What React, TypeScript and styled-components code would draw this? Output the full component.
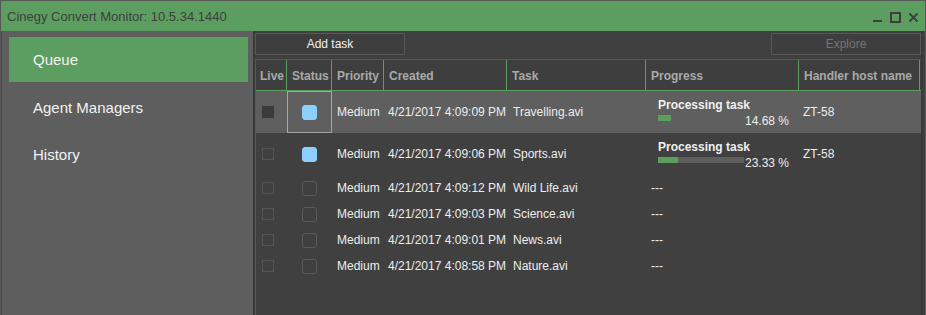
import * as React from 'react';
import styled, { createGlobalStyle } from 'styled-components';

const GlobalStyle = createGlobalStyle`
  html, body {
    margin: 0;
    padding: 0;
    background: #404040;
  }
  body {
    font-family: 'Liberation Sans', Arial, sans-serif;
  }
`;

const green = '#5c9e5f';
const cols = '31px 45px 52px 123px 139px 153px 121px';

type Task = {
  live: 'filled' | 'outline';
  status: 'active' | 'idle';
  created: string;
  name: string;
  progress?: number;
  host?: string;
  selected?: boolean;
};

const tasks: Task[] = [
  { live: 'filled', status: 'active', created: '4/21/2017 4:09:09 PM', name: 'Travelling.avi', progress: 14.68, host: 'ZT-58', selected: true },
  { live: 'outline', status: 'active', created: '4/21/2017 4:09:06 PM', name: 'Sports.avi', progress: 23.33, host: 'ZT-58' },
  { live: 'outline', status: 'idle', created: '4/21/2017 4:09:12 PM', name: 'Wild Life.avi' },
  { live: 'outline', status: 'idle', created: '4/21/2017 4:09:03 PM', name: 'Science.avi' },
  { live: 'outline', status: 'idle', created: '4/21/2017 4:09:01 PM', name: 'News.avi' },
  { live: 'outline', status: 'idle', created: '4/21/2017 4:08:58 PM', name: 'Nature.avi' },
];

const Window = styled.div`
  width: 926px;
  height: 315px;
  box-sizing: border-box;
  border: 1px solid #585858;
  border-bottom: none;
  display: flex;
  flex-direction: column;
  overflow: hidden;
  background: #404040;
`;

const TitleBar = styled.div`
  height: 30px;
  flex: none;
  background: ${green};
  display: flex;
  align-items: center;
  justify-content: space-between;
  padding: 0 6px 0 6px;
  color: #3e3e3e;
  font-size: 13px;
`;

const Controls = styled.div`
  display: flex;
  align-items: center;
  gap: 7px;
  margin-top: 2px;
`;

const Body = styled.div`
  flex: 1;
  display: flex;
  min-height: 0;
`;

const Sidebar = styled.nav`
  width: 252px;
  flex: none;
  background: #5e5e5e;
  border-left: 1px solid #4a4a4a;
  box-sizing: border-box;
  padding: 6px 5px 0 7px;
  display: flex;
  flex-direction: column;
`;

const NavItem = styled.div<{ $active?: boolean }>`
  height: 45px;
  flex: none;
  display: flex;
  align-items: center;
  padding-left: 24px;
  margin-bottom: 2.5px;
  font-size: 15px;
  color: #f2f2f2;
  background: ${({ $active }) => ($active ? green : 'transparent')};
`;

const Divider = styled.div`
  width: 2px;
  flex: none;
  background: #393939;
`;

const Main = styled.main`
  width: 666px;
  flex: none;
  padding-top: 2px;
  display: flex;
  flex-direction: column;
`;

const Toolbar = styled.div`
  display: flex;
  justify-content: space-between;
  margin-bottom: 4px;
`;

const ToolButton = styled.button<{ $disabled?: boolean }>`
  width: 150px;
  height: 22px;
  box-sizing: border-box;
  border: 1px solid #585858;
  background: #3e3e3e;
  color: ${({ $disabled }) => ($disabled ? '#757575' : '#f0f0f0')};
  font-family: 'Liberation Sans', Arial, sans-serif;
  font-size: 12px;
  padding: 0;
`;

const Table = styled.div`
  flex: 1;
  border-left: 1px solid #575757;
  border-top: 1px solid #575757;
  display: flex;
  flex-direction: column;
`;

const HeaderRow = styled.div`
  display: grid;
  grid-template-columns: ${cols};
  height: 30px;
  border-bottom: 1px solid ${green};
  background: #3e3e3e;
`;

const HeaderCell = styled.div`
  border-right: 1px solid ${green};
  display: flex;
  align-items: center;
  padding-left: 5px;
  padding-top: 1px;
  font-size: 12px;
  font-weight: bold;
  color: #a9a9a9;
  white-space: nowrap;
  overflow: hidden;
  &:first-child {
    padding-left: 4px;
  }
`;

const Row = styled.div<{ $tall?: boolean; $selected?: boolean }>`
  display: grid;
  grid-template-columns: ${cols};
  height: ${({ $tall }) => ($tall ? 42 : 26)}px;
  background: ${({ $selected }) => ($selected ? '#5f5f5f' : 'transparent')};
  font-size: 12px;
  color: #eeeeee;
`;

const Cell = styled.div<{ $pad?: number }>`
  display: flex;
  align-items: center;
  padding-left: ${({ $pad }) => $pad ?? 5}px;
  white-space: nowrap;
  overflow: hidden;
  box-sizing: border-box;
`;

const StatusCell = styled(Cell)<{ $focus?: boolean }>`
  justify-content: center;
  padding-left: 0;
  border: 1px solid ${({ $focus }) => ($focus ? '#a6a6a6' : 'transparent')};
`;

const LiveBox = styled.div<{ $filled?: boolean }>`
  width: 12px;
  height: 12px;
  box-sizing: border-box;
  margin-left: 6px;
  background: ${({ $filled }) => ($filled ? '#3b3b3b' : 'transparent')};
  border: 1px solid ${({ $filled }) => ($filled ? '#3b3b3b' : '#555555')};
`;

const StatusBox = styled.div<{ $active?: boolean }>`
  width: 15px;
  height: 15px;
  box-sizing: border-box;
  border-radius: 3px;
  background: ${({ $active }) => ($active ? '#8ccffc' : 'transparent')};
  border: 1px solid ${({ $active }) => ($active ? '#8ccffc' : '#5b5b5b')};
`;

const Progress = styled.div`
  margin-left: 7px;
  width: 131px;
  display: flex;
  flex-direction: column;
`;

const ProgressTitle = styled.div`
  font-weight: bold;
  font-size: 12px;
  color: #f0f0f0;
  line-height: 14px;
`;

const ProgressLine = styled.div`
  display: flex;
  align-items: flex-start;
  justify-content: space-between;
  height: 14px;
`;

const Track = styled.div`
  width: 86px;
  height: 6px;
  margin-top: 3px;
  background: #5f5f5f;
`;

const Fill = styled.div`
  height: 100%;
  background: ${green};
`;

const Percent = styled.span`
  font-size: 12px;
  color: #eeeeee;
  line-height: 19px;
`;

function WindowControls() {
  return (
    <Controls>
      <svg width="11" height="11" viewBox="0 0 11 11">
        <rect x="1" y="8" width="9" height="2" fill="#3e3e3e" />
      </svg>
      <svg width="11" height="11" viewBox="0 0 11 11">
        <rect x="1" y="1" width="9" height="9" fill="none" stroke="#3e3e3e" strokeWidth="2" />
      </svg>
      <svg width="11" height="11" viewBox="0 0 11 11">
        <path d="M1.5 1.5 L9.5 9.5 M9.5 1.5 L1.5 9.5" stroke="#3e3e3e" strokeWidth="1.8" />
      </svg>
    </Controls>
  );
}

function TaskRow({ task }: { task: Task }) {
  const tall = task.progress !== undefined;
  return (
    <Row $tall={tall} $selected={task.selected}>
      <Cell $pad={0}>
        <LiveBox $filled={task.live === 'filled'} />
      </Cell>
      <StatusCell $focus={task.selected}>
        <StatusBox $active={task.status === 'active'} />
      </StatusCell>
      <Cell>Medium</Cell>
      <Cell $pad={4}>{task.created}</Cell>
      <Cell $pad={6}>{task.name}</Cell>
      <Cell>
        {tall ? (
          <Progress>
            <ProgressTitle>Processing task</ProgressTitle>
            <ProgressLine>
              <Track>
                <Fill style={{ width: `${task.progress}%` }} />
              </Track>
              <Percent>{task.progress!.toFixed(2)} %</Percent>
            </ProgressLine>
          </Progress>
        ) : (
          '---'
        )}
      </Cell>
      <Cell $pad={4}>{task.host ?? ''}</Cell>
    </Row>
  );
}

export default function App() {
  return (
    <>
      <GlobalStyle />
      <Window>
        <TitleBar>
          <span>Cinegy Convert Monitor: 10.5.34.1440</span>
          <WindowControls />
        </TitleBar>
        <Body>
          <Sidebar>
            <NavItem $active>Queue</NavItem>
            <NavItem>Agent Managers</NavItem>
            <NavItem>History</NavItem>
          </Sidebar>
          <Divider />
          <Main>
            <Toolbar>
              <ToolButton>Add task</ToolButton>
              <ToolButton $disabled>Explore</ToolButton>
            </Toolbar>
            <Table>
              <HeaderRow>
                <HeaderCell>Live</HeaderCell>
                <HeaderCell>Status</HeaderCell>
                <HeaderCell>Priority</HeaderCell>
                <HeaderCell>Created</HeaderCell>
                <HeaderCell>Task</HeaderCell>
                <HeaderCell>Progress</HeaderCell>
                <HeaderCell>Handler host name</HeaderCell>
              </HeaderRow>
              {tasks.map((t) => (
                <TaskRow key={t.name} task={t} />
              ))}
            </Table>
          </Main>
          <Divider />
        </Body>
      </Window>
    </>
  );
}
